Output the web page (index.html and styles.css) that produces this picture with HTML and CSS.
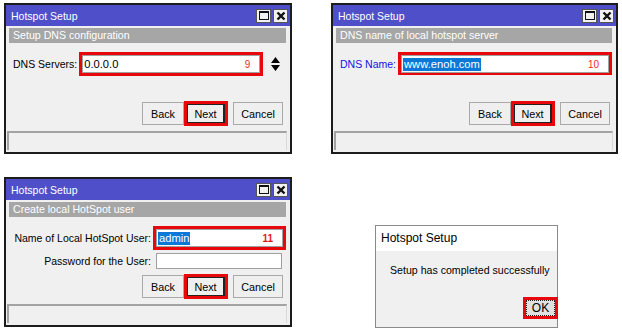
FILE: index.html
```html
<!DOCTYPE html>
<html lang="en">
<head>
    <meta charset="UTF-8">
    <title>Hotspot Setup</title>
    <link rel="stylesheet" href="styles.css">
</head>
<body>
    <div class="canvas">

        <!-- step 9: DNS servers -->
        <div class="win w1">
            <div class="titlebar">
                <span class="title">Hotspot Setup</span>
                <div class="tbtns">
                    <span class="tb"><span class="max-box"></span></span>
                    <span class="tb"><svg width="10" height="10" viewBox="0 0 10 10"><path d="M1.5 1.5 L8.5 8.5 M8.5 1.5 L1.5 8.5" stroke="#111" stroke-width="2.4"/></svg></span>
                </div>
            </div>
            <div class="section">Setup DNS configuration</div>
            <div class="content">
                <div class="field">
                    <label class="lbl">DNS Servers:</label>
                    <div class="mark mark-dns">
                        <div class="input">
                            <span class="val">0.0.0.0</span>
                            <span class="num">9</span>
                        </div>
                    </div>
                    <svg class="spin" width="9" height="14" viewBox="0 0 9 14"><path d="M4.5 0 L9 6 L0 6 Z M0 8 L9 8 L4.5 14 Z" fill="#000"/></svg>
                </div>
            </div>
            <div class="buttons">
                <button class="btn btn-back">Back</button>
                <span class="mark mark-btn"><button class="btn btn-next">Next</button></span>
                <button class="btn btn-cancel">Cancel</button>
            </div>
            <div class="status"></div>
        </div>

        <!-- step 10: DNS name -->
        <div class="win w2">
            <div class="titlebar">
                <span class="title">Hotspot Setup</span>
                <div class="tbtns">
                    <span class="tb"><span class="max-box"></span></span>
                    <span class="tb"><svg width="10" height="10" viewBox="0 0 10 10"><path d="M1.5 1.5 L8.5 8.5 M8.5 1.5 L1.5 8.5" stroke="#111" stroke-width="2.4"/></svg></span>
                </div>
            </div>
            <div class="section">DNS name of local hotspot server</div>
            <div class="content">
                <div class="field">
                    <label class="lbl lbl-blue">DNS Name:</label>
                    <div class="mark mark-name">
                        <div class="input">
                            <span class="val sel">www.enoh.com</span>
                            <span class="num">10</span>
                        </div>
                    </div>
                </div>
            </div>
            <div class="buttons">
                <button class="btn btn-back">Back</button>
                <span class="mark mark-btn"><button class="btn btn-next">Next</button></span>
                <button class="btn btn-cancel">Cancel</button>
            </div>
            <div class="status"></div>
        </div>

        <!-- step 11: local user -->
        <div class="win w3">
            <div class="titlebar">
                <span class="title">Hotspot Setup</span>
                <div class="tbtns">
                    <span class="tb"><span class="max-box"></span></span>
                    <span class="tb"><svg width="10" height="10" viewBox="0 0 10 10"><path d="M1.5 1.5 L8.5 8.5 M8.5 1.5 L1.5 8.5" stroke="#111" stroke-width="2.4"/></svg></span>
                </div>
            </div>
            <div class="section">Create local HotSpot user</div>
            <div class="content">
                <div class="form-grid">
                    <label class="lbl">Name of Local HotSpot User:</label>
                    <div class="mark mark-user">
                        <div class="input">
                            <span class="val sel">admin</span>
                            <span class="num num-bold">11</span>
                        </div>
                    </div>
                    <label class="lbl">Password for the User:</label>
                    <div class="input input-pass"></div>
                </div>
            </div>
            <div class="buttons">
                <button class="btn btn-back">Back</button>
                <span class="mark mark-btn"><button class="btn btn-next">Next</button></span>
                <button class="btn btn-cancel">Cancel</button>
            </div>
            <div class="status"></div>
        </div>

        <!-- final message box -->
        <div class="msgbox">
            <div class="msg-title">Hotspot Setup</div>
            <div class="msg-body">
                <p class="msg-text">Setup has completed successfully</p>
                <div class="msg-actions">
                    <span class="mark mark-ok"><button class="ok-btn">OK</button></span>
                </div>
            </div>
        </div>

    </div>
</body>
</html>
```

FILE: styles.css
```css
body {
    margin: 0;
    background: #fff;
    font-family: 'Liberation Sans', Arial, sans-serif;
    font-size: 10.5px;
    color: #000;
}

.canvas {
    display: grid;
    grid-template-columns: 288px 287px;
    column-gap: 39px;
    row-gap: 23px;
    padding: 3px 0 0 4px;
    align-items: start;
}

/* winbox style window */
.win {
    box-sizing: border-box;
    border: 2px solid #1c1c1c;
    background: #f0f0f0;
    display: flex;
    flex-direction: column;
    white-space: nowrap;
}

.w1,
.w2 {
    height: 151px;
}

.w3 {
    height: 150px;
}

.titlebar {
    height: 21px;
    background: #4f50c9;
    display: flex;
    align-items: center;
    justify-content: space-between;
    padding: 0 2px 0 5px;
}

.title {
    color: #fff;
    font-size: 10.5px;
}

.tbtns {
    display: flex;
    gap: 2px;
}

.tb {
    box-sizing: border-box;
    width: 15px;
    height: 14px;
    background: #f2f2f2;
    border: 1px solid #555;
    display: flex;
    align-items: center;
    justify-content: center;
}

.max-box {
    box-sizing: border-box;
    width: 10px;
    height: 9px;
    border: 1px solid #111;
    border-top-width: 2px;
}

.section {
    margin: 2px 4px 0 3px;
    height: 15px;
    line-height: 15px;
    background: #a6a6a6;
    color: #fff;
    padding-left: 4px;
    font-size: 10.6px;
}

.content {
    flex: 1;
    padding: 9px 0 0 7px;
}

.field {
    display: flex;
    align-items: center;
}

.lbl {
    font-size: 10.5px;
    margin-right: 2px;
    flex: none;
}

.lbl-blue {
    color: #1010e8;
}

/* red highlight frame */
.mark {
    box-sizing: border-box;
    border: 3px solid #e8070b;
    display: flex;
    flex: none;
}

.input {
    box-sizing: border-box;
    flex: 1;
    height: 18px;
    background: #fff;
    border: 1px solid #a0a0a0;
    display: flex;
    align-items: center;
    justify-content: space-between;
    padding: 0 9px 0 1px;
    font-size: 11.2px;
}

.mark-dns {
    width: 184px;
    height: 24px;
}

.mark-name {
    width: 214px;
    height: 23px;
}

.mark-user {
    width: 133px;
    height: 24px;
}

.val.sel {
    background: #0a78d6;
    color: #fff;
    padding: 0 1px;
    line-height: 13px;
}

.num {
    color: #f0282c;
    font-size: 10px;
}

.num-bold {
    font-weight: bold;
    color: #e41a1a;
}

.spin {
    margin-left: 8px;
}

.form-grid {
    display: grid;
    grid-template-columns: 140px auto;
    align-items: center;
    row-gap: 3px;
}

.form-grid .lbl {
    text-align: right;
}

.input-pass {
    width: 126px;
    height: 16px;
    margin-left: 3px;
    flex: none;
}

.buttons {
    display: flex;
    justify-content: flex-end;
    align-items: center;
    padding-right: 7px;
    margin-bottom: 5px;
}

.w2 .buttons {
    padding-right: 6px;
}

.btn {
    box-sizing: border-box;
    height: 23px;
    background: #efefef;
    border: 1px solid #a9a9a9;
    font-family: inherit;
    font-size: 10.8px;
    padding: 0;
    color: #000;
}

.btn-back {
    width: 42px;
}

.btn-cancel {
    width: 50px;
    margin-left: 5px;
}

.mark-btn {
    width: 44px;
    height: 25px;
    padding: 0;
}

.btn-next {
    width: 38px;
    height: 19px;
    border: 1px solid #222;
    border-right-width: 2px;
}

.status {
    height: 19px;
    margin: 0 3px 2px 1px;
    box-sizing: border-box;
    border-top: 2px solid #a3a3a3;
    border-left: 2px solid #a3a3a3;
    border-right: 1px solid #d8d8d8;
}

/* windows message box */
.msgbox {
    box-sizing: border-box;
    width: 183px;
    height: 103px;
    margin: 48px 0 0 44px;
    border: 1px solid #8a8a8a;
    background: #f0f0f0;
    display: flex;
    flex-direction: column;
    white-space: nowrap;
}

.msg-title {
    height: 25px;
    line-height: 25px;
    background: #fff;
    padding-left: 5px;
    font-size: 12px;
}

.msg-body {
    flex: 1;
    display: flex;
    flex-direction: column;
}

.msg-text {
    margin: 13px 0 0 14px;
    font-size: 10.6px;
}

.msg-actions {
    margin-top: auto;
    margin-bottom: 8px;
    display: flex;
    justify-content: flex-end;
}

.mark-ok {
    width: 35px;
    height: 22px;
    margin-right: -1px;
}

.ok-btn {
    flex: 1;
    background: #e1e1e1;
    border: 1px dotted #222;
    font-family: inherit;
    font-size: 12px;
    padding: 0;
}
```
